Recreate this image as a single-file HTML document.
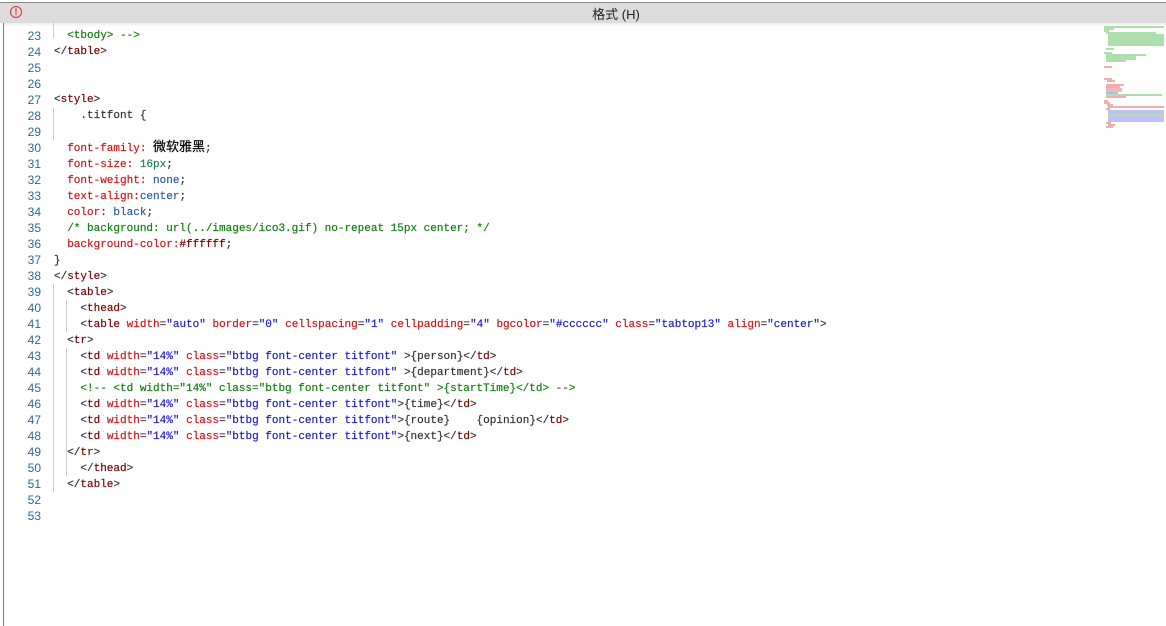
<!DOCTYPE html>
<html><head><meta charset="utf-8"><style>
html,body{margin:0;padding:0;width:1166px;height:626px;overflow:hidden;background:#fff;position:relative}
.bar{position:absolute;left:0;top:2px;width:1166px;height:21px;background:#dcdcdc;border-top:1px solid #8a8a8a;box-sizing:border-box}
.title{position:absolute;left:0;width:1232px;top:4px;text-align:center;font:13px "Liberation Sans","Noto Sans CJK SC",sans-serif;color:#222}
.ic{position:absolute;left:10px;top:6px;width:10px;height:10px;border:1.3px solid #e03030;border-radius:50%;color:#e03030;font:bold 9px/10px "Liberation Sans",sans-serif;text-align:center}
.lb{position:absolute;left:3px;top:23px;width:1px;height:603px;background:#777}
.shade{position:absolute;left:4px;top:23px;width:1162px;height:4px;background:linear-gradient(#eee,#fff)}
.ln{position:absolute;left:0;width:41px;text-align:right;font:12px/16px "Liberation Sans",sans-serif;color:#2b6a96}
.code{position:absolute;left:54px;white-space:pre;font:11px/16px "Liberation Mono","Noto Sans CJK SC",monospace;color:#333;-webkit-text-stroke:0.2px}
.g{position:absolute;width:1px;background:#ccc}
.t{color:#800000}.a{color:#e01010}.v{color:#1a1ae0}.c{color:#108010}.p{color:#e01010}.n{color:#2a5db0}.k{color:#000;font-size:13px}
.mm{position:absolute;height:1.5px}
</style></head><body>
<div class="bar"></div>
<div class="title">格式 (H)</div>
<div class="ic">!</div>
<div class="lb"></div>
<div class="shade"></div>
<div class="g" style="left:53px;top:22px;height:16px"></div>
<div class="g" style="left:53px;top:108px;height:32px"></div>
<div class="g" style="left:53px;top:284px;height:208px"></div>
<div class="g" style="left:66px;top:300px;height:32px"></div>
<div class="g" style="left:66px;top:348px;height:112px"></div>
<div class="g" style="left:66px;top:460px;height:16px"></div>

<div class="ln" style="top:28px">23<br>24<br>25<br>26<br>27<br>28<br>29<br>30<br>31<br>32<br>33<br>34<br>35<br>36<br>37<br>38<br>39<br>40<br>41<br>42<br>43<br>44<br>45<br>46<br>47<br>48<br>49<br>50<br>51<br>52<br>53</div>
<div class="code" style="top:28px">  <span class="c">&lt;tbody&gt; --&gt;</span>
&lt;/<span class="t">table</span>&gt;


&lt;<span class="t">style</span>&gt;
    .titfont {

  <span class="p">font-family:</span> <span class="k">微软雅黑</span>;
  <span class="p">font-size:</span> <span style="color:#208060">16px</span>;
  <span class="p">font-weight:</span> <span class="n">none</span>;
  <span class="p">text-align:</span><span class="n">center</span>;
  <span class="p">color:</span> <span class="n">black</span>;
  <span class="c">/* background: url(../images/ico3.gif) no-repeat 15px center; */</span>
  <span class="p">background-color:</span><span class="t">#ffffff</span>;
}
&lt;/<span class="t">style</span>&gt;
  &lt;<span class="t">table</span>&gt;
    &lt;<span class="t">thead</span>&gt;
    &lt;<span class="t">table</span> <span class="a">width</span>=<span class="v">"auto"</span> <span class="a">border</span>=<span class="v">"0"</span> <span class="a">cellspacing</span>=<span class="v">"1"</span> <span class="a">cellpadding</span>=<span class="v">"4"</span> <span class="a">bgcolor</span>=<span class="v">"#cccccc"</span> <span class="a">class</span>=<span class="v">"tabtop13"</span> <span class="a">align</span>=<span class="v">"center"</span>&gt;
  &lt;<span class="t">tr</span>&gt;
    &lt;<span class="t">td</span> <span class="a">width</span>=<span class="v">"14%"</span> <span class="a">class</span>=<span class="v">"btbg font-center titfont"</span> &gt;{person}&lt;/<span class="t">td</span>&gt;
    &lt;<span class="t">td</span> <span class="a">width</span>=<span class="v">"14%"</span> <span class="a">class</span>=<span class="v">"btbg font-center titfont"</span> &gt;{department}&lt;/<span class="t">td</span>&gt;
    <span class="c">&lt;!-- &lt;td width="14%" class="btbg font-center titfont" &gt;{startTime}&lt;/td&gt; --&gt;</span>
    &lt;<span class="t">td</span> <span class="a">width</span>=<span class="v">"14%"</span> <span class="a">class</span>=<span class="v">"btbg font-center titfont"</span>&gt;{time}&lt;/<span class="t">td</span>&gt;
    &lt;<span class="t">td</span> <span class="a">width</span>=<span class="v">"14%"</span> <span class="a">class</span>=<span class="v">"btbg font-center titfont"</span>&gt;{route}    {opinion}&lt;/<span class="t">td</span>&gt;
    &lt;<span class="t">td</span> <span class="a">width</span>=<span class="v">"14%"</span> <span class="a">class</span>=<span class="v">"btbg font-center titfont"</span>&gt;{next}&lt;/<span class="t">td</span>&gt;
  &lt;/<span class="t">tr</span>&gt;
    &lt;/<span class="t">thead</span>&gt;
  &lt;/<span class="t">table</span>&gt;</div>

<div style="position:absolute;left:1104px;top:25px;width:62px;height:106px;opacity:.6">
<div class="mm" style="left:0;top:1px;width:60px;background:#7c7"></div>
<div class="mm" style="left:0;top:3px;width:10px;background:#7c7"></div>
<div class="mm" style="left:0;top:5px;width:5px;background:#7c7"></div>
<div class="mm" style="left:2px;top:7px;width:50px;background:#7c7"></div>
<div class="mm" style="left:4px;top:9px;width:56px;background:#7c7"></div>
<div class="mm" style="left:4px;top:11px;width:56px;background:#7c7"></div>
<div class="mm" style="left:4px;top:13px;width:56px;background:#7c7"></div>
<div class="mm" style="left:4px;top:15px;width:56px;background:#7c7"></div>
<div class="mm" style="left:4px;top:17px;width:56px;background:#7c7"></div>
<div class="mm" style="left:4px;top:19px;width:56px;background:#7c7"></div>
<div class="mm" style="left:2px;top:23px;width:8px;background:#7c7"></div>
<div class="mm" style="left:0;top:27px;width:8px;background:#7c7"></div>
<div class="mm" style="left:2px;top:29px;width:40px;background:#7c7"></div>
<div class="mm" style="left:2px;top:31px;width:30px;background:#7c7"></div>
<div class="mm" style="left:2px;top:33px;width:30px;background:#7c7"></div>
<div class="mm" style="left:2px;top:35px;width:20px;background:#7c7"></div>
<div class="mm" style="left:0;top:41px;width:8px;background:#e77"></div>
<div class="mm" style="left:0;top:53px;width:8px;background:#e77"></div>
<div class="mm" style="left:3px;top:55px;width:8px;background:#e77"></div>
<div class="mm" style="left:2px;top:59px;width:18px;background:#e77"></div>
<div class="mm" style="left:2px;top:61px;width:14px;background:#e77"></div>
<div class="mm" style="left:2px;top:63px;width:16px;background:#e88"></div>
<div class="mm" style="left:2px;top:65px;width:16px;background:#e88"></div>
<div class="mm" style="left:2px;top:67px;width:12px;background:#88e"></div>
<div class="mm" style="left:2px;top:69px;width:56px;background:#7c7"></div>
<div class="mm" style="left:2px;top:71px;width:20px;background:#e77"></div>
<div class="mm" style="left:0;top:75px;width:4px;background:#e77"></div>
<div class="mm" style="left:0;top:77px;width:6px;background:#e77"></div>
<div class="mm" style="left:3px;top:79px;width:6px;background:#e77"></div>
<div class="mm" style="left:4px;top:81px;width:56px;background:#e77"></div>
<div class="mm" style="left:2px;top:83px;width:4px;background:#e77"></div>
<div class="mm" style="left:4px;top:85px;width:56px;background:#99e"></div>
<div class="mm" style="left:4px;top:87px;width:56px;background:#99e"></div>
<div class="mm" style="left:4px;top:89px;width:56px;background:#7c7"></div>
<div class="mm" style="left:4px;top:91px;width:56px;background:#99e"></div>
<div class="mm" style="left:4px;top:93px;width:56px;background:#99e"></div>
<div class="mm" style="left:4px;top:95px;width:56px;background:#99e"></div>
<div class="mm" style="left:2px;top:97px;width:5px;background:#e77"></div>
<div class="mm" style="left:4px;top:99px;width:7px;background:#e77"></div>
<div class="mm" style="left:2px;top:101px;width:7px;background:#e77"></div>
</div>
</body></html>
